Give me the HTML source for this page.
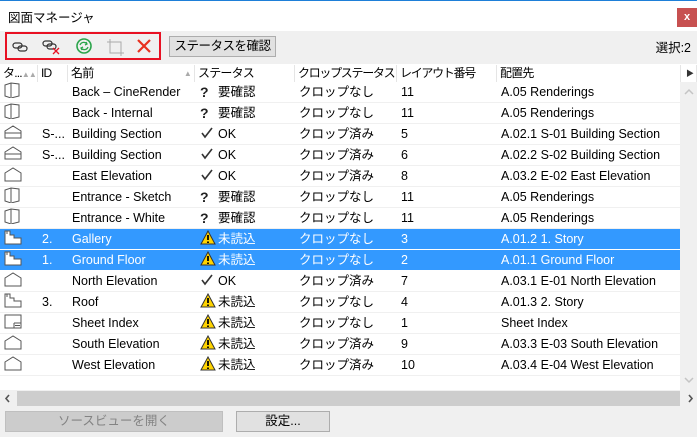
<!DOCTYPE html>
<html><head><meta charset="utf-8"><style>
*{margin:0;padding:0;box-sizing:border-box}
body{width:697px;height:437px;background:#f0f0f0;font-family:"Liberation Sans","Noto Sans CJK JP",sans-serif;font-size:12.5px;color:#000;position:relative;overflow:hidden}
.abs{position:absolute}
#title{left:0;top:0;width:697px;height:31px;background:#fff;border-top:1px solid #1e7fd8}
#title span{position:absolute;left:8px;top:6px;font-size:12.5px}
#close{right:0;top:8px;width:20px;height:19px;background:#c75050;color:#fff;font-size:11px;text-align:center;line-height:18px;font-weight:bold}
#tb{left:5px;top:32px;width:156px;height:28px;border:2px solid #e81123}
#chk{left:169px;top:36px;width:107px;height:21px;background:#e1e1e1;border:1px solid #adadad;text-align:center;line-height:19px;letter-spacing:-0.5px}
#sel{right:6px;top:37px}
#list{left:0;top:64px;width:680px;height:326px;background:#fff}
#hdr{left:0;top:0;width:697px;height:18px;background:#fff}
.h{position:absolute;top:1px;height:17px;border-right:1px solid #e5e5e5;padding-left:3px;line-height:17px;font-size:12px;white-space:nowrap;overflow:hidden;letter-spacing:-0.8px}
.row{position:absolute;left:0;width:680px;height:21px;border-bottom:1px solid #f0f0f0;line-height:20px}
.row.s{background:#3399ff;color:#fff;border-bottom:1px solid #fff}
.row span{position:absolute;top:0;white-space:nowrap}
.ic{left:4px;top:3px}
#vs{left:680px;top:82px;width:17px;height:308px;background:#f0f0f0}
#hs{left:0;top:390px;width:697px;height:17px}
.btn{position:absolute;top:411px;height:21px;border:1px solid #adadad;text-align:center;line-height:19px}
</style></head><body>
<div id="title" class="abs"><span>図面マネージャ</span></div>
<div id="close" class="abs">x</div>
<div id="tb" class="abs">
<svg width="152" height="24" viewBox="0 0 152 24">
<g fill="none" stroke="#333" stroke-width="1.2">
<rect x="6" y="9" width="9" height="5" rx="2.5"/><rect x="11" y="12" width="9" height="5" rx="2.5"/>
<rect x="36" y="7" width="9" height="5" rx="2.5"/><rect x="40" y="10" width="9" height="5" rx="2.5"/>
</g>
<path d="M46 14l6 6M52 14l-6 6" stroke="#e81123" stroke-width="1.3"/>
<circle cx="77" cy="12" r="7" fill="none" stroke="#2aa44a" stroke-width="1.6"/>
<path d="M73 11a4 4 0 0 1 7-1M81 13a4 4 0 0 1-7 1M79 8l1 2-2 1M75 16l-1-2 2-1" fill="none" stroke="#2aa44a" stroke-width="1.3"/>
<path d="M103 5v14h14M100 8h14v14" fill="none" stroke="#aaa" stroke-width="1"/>
<path d="M131 6l12 12M143 6l-12 12" stroke="#e8301e" stroke-width="2.2"/>
</svg></div>
<div id="chk" class="abs">ステータスを確認</div>
<div id="sel" class="abs">選択:2</div>
<div id="list" class="abs">
<div id="hdr" class="abs">
<div class="h" style="left:0;width:38px">タ...<span style="color:#aaa;font-size:8px">▲▲</span></div>
<div class="h" style="left:38px;width:30px">ID</div>
<div class="h" style="left:68px;width:127px">名前<span style="position:absolute;right:3px;color:#aaa;font-size:8px">▲</span></div>
<div class="h" style="left:195px;width:100px">ステータス</div>
<div class="h" style="left:295px;width:102px;letter-spacing:-1.3px">クロップステータス</div>
<div class="h" style="left:397px;width:100px;letter-spacing:-1.3px">レイアウト番号</div>
<div class="h" style="left:497px;width:183px;border:none">配置先</div>
<div class="h" style="left:680px;width:17px;border-left:1px solid #e5e5e5;font-size:8px;padding-left:5px;color:#333">▶</div>
</div>
</div>
<div id="rows" class="abs" style="left:0;top:82px"></div>
<div id="vs" class="abs"><svg width="17" height="308"><path d="M5 12l4-4 4 4" fill="none" stroke="#c4c4c4" stroke-width="1.5"/><path d="M5 296l4 4 4-4" fill="none" stroke="#c4c4c4" stroke-width="1.5"/></svg></div>
<div id="hs" class="abs"><svg style="position:absolute;left:0;top:0" width="17" height="17"><path d="M9 5l-3 3.5 3 3.5" fill="none" stroke="#555" stroke-width="1.6"/></svg><div style="position:absolute;left:17px;top:1px;width:663px;height:15px;background:#cdcdcd"></div><svg style="position:absolute;left:680px;top:0" width="17" height="17"><path d="M9 5l3 3.5-3 3.5" fill="none" stroke="#555" stroke-width="1.6"/></svg></div>
<div class="btn" style="left:5px;width:218px;background:#cccccc;border-color:#bfbfbf;color:#838383">ソースビューを開く</div>
<div class="btn" style="left:236px;width:94px;background:#e1e1e1">設定...</div>
<script>
const D=[
["d","","Back – CineRender","q","クロップなし","11","A.05 Renderings"],
["d","","Back - Internal","q","クロップなし","11","A.05 Renderings"],
["s","S-...","Building Section","ok","クロップ済み","5","A.02.1 S-01 Building Section"],
["s","S-...","Building Section","ok","クロップ済み","6","A.02.2 S-02 Building Section"],
["e","","East Elevation","ok","クロップ済み","8","A.03.2 E-02 East Elevation"],
["d","","Entrance - Sketch","q","クロップなし","11","A.05 Renderings"],
["d","","Entrance - White","q","クロップなし","11","A.05 Renderings"],
["p","2.","Gallery","w","クロップなし","3","A.01.2 1. Story",1],
["p","1.","Ground Floor","w","クロップなし","2","A.01.1 Ground Floor",1],
["e","","North Elevation","ok","クロップ済み","7","A.03.1 E-01 North Elevation"],
["p","3.","Roof","w","クロップなし","4","A.01.3 2. Story"],
["i","","Sheet Index","w","クロップなし","1","Sheet Index"],
["e","","South Elevation","w","クロップ済み","9","A.03.3 E-03 South Elevation"],
["e","","West Elevation","w","クロップ済み","10","A.03.4 E-04 West Elevation"]];
const IC={
d:'<path d="M1 3l6-2 8 1v12l-8 2-6-2z M7 1v14" />',
s:'<path d="M1 7l8-5 8 5v7H1z M1 9h16"/>',
e:'<path d="M1 7l8-5 8 5v8H1z"/>',
p:'<path d="M1 2h5v4h4v3h7v6H1z M3 2v3"/>',
i:'<path d="M1 2h16v13H1z M10 10h7M10 10v5M11 12.5h5"/>'};
const ST={q:'<b style="font-size:14px;color:#222">?</b>',ok:'<svg width="14" height="12" style="vertical-align:-1px"><path d="M2 6l3 4 7-9" fill="none" stroke="#333" stroke-width="1.6"/></svg>',
w:'<svg width="16" height="15" style="vertical-align:-2px"><path d="M8 1L15 14H1z" fill="#ffd400" stroke="#333" stroke-width="1"/><path d="M8 5v5M8 11.5v1.5" stroke="#000" stroke-width="1.8"/></svg>'};
const SL={q:'要確認',ok:'OK',w:'未読込'};
let h='';D.forEach((r,i)=>{const s=r[7];
h+=`<div class="row${s?' s':''}" style="top:${i*21}px"><span class="ic"><svg width="19" height="16" viewBox="0 0 19 16"><g fill="${s?'#fff':'none'}" stroke="#555" stroke-width="1">${IC[r[0]]}</g></svg></span>
<span style="left:42px">${r[1]}</span><span style="left:72px">${r[2]}</span>
<span style="left:200px">${ST[r[3]]}</span><span style="left:218px">${SL[r[3]]}</span>
<span style="left:299px">${r[4]}</span><span style="left:401px">${r[5]}</span><span style="left:501px">${r[6]}</span></div>`});
document.getElementById('rows').innerHTML=h;
</script>
</body></html>
